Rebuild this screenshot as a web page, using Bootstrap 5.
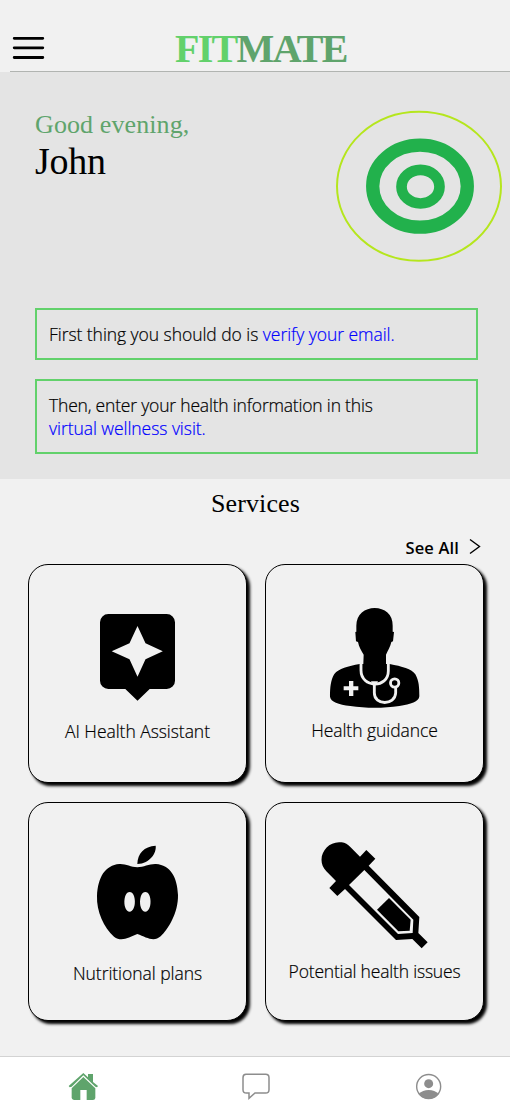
<!DOCTYPE html>
<html lang="en">
<head>
<meta charset="utf-8">
<meta name="viewport" content="width=device-width, initial-scale=1">
<title>FITMATE</title>
<link href="https://cdn.jsdelivr.net/npm/bootstrap@5.3.0/dist/css/bootstrap.min.css" rel="stylesheet">
<style>
  body { background: #f1f1f1; color: #000; font-family: "Open Sans", "Noto Sans", sans-serif; font-weight: 300; font-size: 17.5px; line-height: 23px; letter-spacing: -.05px; }
  svg { display: block; flex: none; }
  .serif { font-family: "Liberation Serif", "Times New Roman", serif; font-weight: 400; }
  .app { height: 1107px; overflow: hidden; }
  .topbar { height: 72px; padding: 33px 0 0 12px; }
  .topbar::after { content: ""; position: absolute; left: 10px; right: 0; bottom: 0; height: 1px; background: #b1b4b1; }
  .brand { font-size: 40px; line-height: 32px; font-weight: 700; color: #5fa46c; margin-left: 129px; letter-spacing: -1.7px; }
  .brand span { color: #62d16b; }
  .hero { height: 407px; background: #e4e4e4; padding: 38px 7px 0 35px; }
  .greet { font-size: 26px; line-height: 30px; color: #5fa46c; letter-spacing: .1px; }
  .user-name { font-size: 38px; line-height: 42px; letter-spacing: -.3px; }
  .notice, .service { -webkit-text-stroke: .2px currentColor; }
  .notice { border: 2px solid #62d16b; width: 443px; padding: 13px 12px 12px; }
  .notice a { color: #00f; text-decoration: none; }
  .tight { letter-spacing: -.19px; }
  .services-title { font-size: 26px; line-height: 30px; padding: 10px 0 0 1px; letter-spacing: .1px; }
  .see-all { height: 26px; margin-top: 17px; margin-bottom: 2px; padding-right: 29px; gap: 10px; font-weight: 600; font-size: 16.5px; letter-spacing: .15px; }
  .service-grid { display: grid; grid-template-columns: 219px 219px; gap: 19px 18px; padding-left: 28px; }
  .service { height: 219px; border: 1px solid #000; border-radius: 20px; box-shadow: 3px 3px 3px #000; background: #f1f1f1; }
  .tabs { height: 51px; background: #fff; border-top: 1px solid #d3d3d3; padding-top: 14px; }
</style>
</head>
<body>
<div class="app d-flex flex-column">
  <header class="topbar d-flex position-relative">
    <svg width="34" height="30" viewBox="0 0 34 30" stroke="#000" stroke-width="2.8" stroke-linecap="round"><path d="M2.2 5.3h28.600M2.200 14.800h28.600M2.200 24.500h28.600"/></svg>
    <div class="brand serif"><span>FIT</span>MATE</div>
  </header>

  <section class="hero">
    <div class="d-flex justify-content-between">
      <div class="serif">
        <div class="greet">Good evening,</div>
        <div class="user-name">John</div>
      </div>
      <svg width="168" height="154" viewBox="335 110 168 154" fill="none">
        <ellipse cx="419" cy="186.300" rx="82" ry="74.500" stroke="#b5e61d" stroke-width="2"/>
        <ellipse cx="420" cy="186.200" rx="47.300" ry="41" stroke="#22b14c" stroke-width="13.300"/>
        <ellipse cx="420.500" cy="186.700" rx="19" ry="16.800" stroke="#22b14c" stroke-width="10.700"/>
      </svg>
    </div>
    <div class="notice mb-0" style="margin-top:44px">First thing you should do is <a href="#">verify your email.</a></div>
    <div class="notice" style="margin-top:19px"><span class="tight">Then, enter your health information in this</span><br><a href="#">virtual wellness visit.</a></div>
  </section>

  <main class="flex-grow-1">
    <h2 class="services-title serif text-center mb-0">Services</h2>
    <div class="see-all d-flex justify-content-end">
      <span>See All</span>
      <svg width="12" height="22" viewBox="0 0 12 22" fill="none" stroke="#000" stroke-width="1.400"><path d="M1 3.500 10.500 10.500 1 17.500"/></svg>
    </div>
    <div class="service-grid">
      <div class="service d-flex flex-column align-items-center">
        <svg width="80" height="90" viewBox="98 612 80 90" style="margin-top:47px"><path fill-rule="evenodd" d="M108.300 614h58.400a8.300 8.300 0 0 1 8.300 8.300v58.400a8.300 8.300 0 0 1-8.300 8.300h-17L137.500 700.800 125.300 689h-17a8.300 8.300 0 0 1-8.300-8.300v-58.400a8.300 8.300 0 0 1 8.300-8.300zM137.500 626l-8 17.300-17.800 8 17.800 8 8 17.400 8-17.400 17.300-8-17.300-8z"/></svg>
        <div style="margin-top:18px">AI Health Assistant</div>
      </div>
      <div class="service d-flex flex-column align-items-center">
        <svg width="110" height="115" viewBox="0 0 330 345" style="margin-top:35px">
          <path d="M164 24C193 24 219 43 218 77L218 95 222 96 219 124 214 126C211 141 203 152 198 164L198 192 209 192C245 199 276 207 286 223 297 242 298 263 298 289 297 305 272 313 238 318 190 325 138 325 91 318 55 313 32 306 30 290 30 263 32 240 43 222 56 206 84 198 119 192L130 192 131 164C123 151 117 141 114 126L108 124 106 96 109 95 109 77C109 43 135 24 164 24Z"/>
          <g fill="none" stroke="#f1f1f1" stroke-width="8.500"><path d="M123 191v20c0 54 82 55 82 2v-22M163 250v29c0 38 62 38 64 0v-17"/><circle cx="224" cy="249" r="12.500"/></g>
          <path fill="#f1f1f1" d="M87 243h13v16h15v12h-15v17H87v-17H71v-12h16zM153 244h21l-6 12h-10z"/>
        </svg>
        <div style="margin-top:4px">Health guidance</div>
      </div>
      <div class="service d-flex flex-column align-items-center">
        <svg width="88" height="100" viewBox="222 144 264 300" style="margin-top:40px"><path fill-rule="evenodd" d="M352 207C353 174 372 155 407 152 410 173 391 205 352 207ZM298 207C318 206 332 216 352 217 372 216 388 206 408 207 451 210 472 246 474 300 475 353 445 402 422 424 401 442 379 427 352 417 326 428 304 442 282 425 252 398 229 349 231 303 234 246 255 211 298 207ZM329 291C308 291 308 350 329 350S350 291 329 291ZM376 291C355 291 355 350 376 350S397 291 376 291Z"/></svg>
        <div style="margin-top:19px">Nutritional plans</div>
      </div>
      <div class="service d-flex flex-column align-items-center">
        <svg width="112" height="112" viewBox="192 132 336 336" style="margin-top:36px"><path fill-rule="evenodd" d="M286 156 315 185 334 165 361 191 341 212 493 366 490 414 518 442 500 460 472 432 423 435 270 282 247 303 223 279 243 258 214 229C178 190 215 135 260 142 270 143 279 149 286 156ZM328 225 282 270 429 417 473 414 475 374Z"/><path d="M402 309 467 374 464 407 430 409 366 344Z"/></svg>
        <div class="tight" style="margin-top:9px">Potential health issues</div>
      </div>
    </div>
  </main>

  <nav class="tabs d-flex align-items-start">
    <a href="#" aria-label="Home"><svg width="32" height="30" viewBox="204 93 96 90" style="margin-left:68px" fill="#5fa46c"><path d="M250 99 264 112V102H279V126L294 138 291 142 286 140 250 106 215 140 209 142 206 138Z"/><path d="M250 111 286 145V174Q285 180 279 180H260V150H241V180H222Q216 179 215 174V145Z"/></svg></a>
    <a href="#" aria-label="Messages"><svg width="32" height="30" viewBox="720 93 96 90" style="margin-left:140px" fill="none" stroke="#8d8d8d" stroke-width="4.500"><path d="M738 103H797Q807 103 807 113V149Q807 159 797 159H765L747 175V159H739Q729 159 729 149V113Q729 103 738 103Z"/></svg></a>
    <a href="#" aria-label="Profile"><svg width="32" height="30" viewBox="1239 93 96 90" style="margin-left:141px"><circle cx="1286" cy="139.500" r="36" fill="none" stroke="#8d8d8d" stroke-width="4.200"/><circle cx="1286" cy="131" r="13.500" fill="#8d8d8d"/><path fill="#8d8d8d" d="M1256 162Q1268 150 1286 150T1316 162Q1304 177 1286 177T1256 162Z"/></svg></a>
  </nav>
</div>
<script src="https://cdn.jsdelivr.net/npm/bootstrap@5.3.0/dist/js/bootstrap.bundle.min.js"></script>
</body>
</html>
